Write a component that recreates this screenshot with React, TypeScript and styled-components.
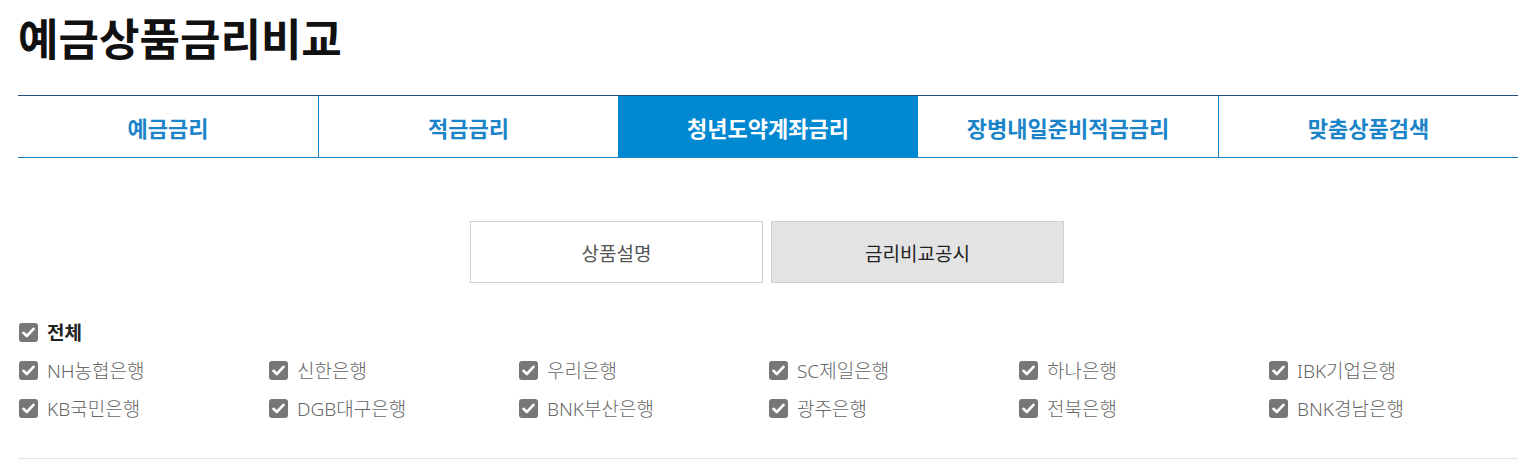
import React from "react";
import styled, { createGlobalStyle } from "styled-components";

const GlobalStyle = createGlobalStyle`
  html, body { margin: 0; padding: 0; background: #fff; }
  body { font-family: "Noto Sans CJK KR", "Noto Sans", sans-serif; }
  * { box-sizing: border-box; }
`;

const Page = styled.div`
  width: 1500px;
  margin-left: 18px;
  padding-top: 9px;
`;

const Title = styled.h1`
  margin: 0;
  font-size: 44px;
  line-height: 56px;
  font-weight: 700;
  color: #111;
`;

const TabBar = styled.div`
  margin-top: 30px;
  display: grid;
  grid-template-columns: repeat(5, 1fr);
  border-top: 1px solid #1f4f7c;
  border-bottom: 1px solid #1a80c4;
  height: 63px;
`;

const Tab = styled.div<{ $active?: boolean; $divider?: boolean }>`
  display: flex;
  align-items: center;
  justify-content: center;
  font-size: 22px;
  font-weight: 700;
  color: ${(p) => (p.$active ? "#fff" : "#1b84c9")};
  background: ${(p) => (p.$active ? "#0088d1" : "#fff")};
  border-left: ${(p) => (p.$divider ? "1px solid #1a80c4" : "none")};
`;

const SubTabs = styled.div`
  margin-top: 63px;
  display: flex;
  justify-content: center;
  gap: 8px;
  padding-right: 2px;
`;

const SubTab = styled.div<{ $active?: boolean }>`
  width: 293px;
  height: 62px;
  display: flex;
  align-items: center;
  justify-content: center;
  border: 1px solid #cfcfcf;
  background: ${(p) => (p.$active ? "#e3e3e3" : "#fff")};
  color: ${(p) => (p.$active ? "#222" : "#555")};
  font-size: 19px;
`;

const Filters = styled.div`
  margin-top: 30px;
  padding-bottom: 31px;
  border-bottom: 1px solid #e3e3e3;
`;

const Grid = styled.div`
  display: grid;
  grid-template-columns: repeat(6, 250px);
`;

const Item = styled.label<{ $bold?: boolean }>`
  display: flex;
  align-items: center;
  gap: 9px;
  height: 38px;
  padding-left: 1px;
  font-family: "Noto Sans", "Noto Sans CJK KR", sans-serif;
  font-size: 19px;
  font-weight: ${(p) => (p.$bold ? 700 : 300)};
  color: ${(p) => (p.$bold ? "#222" : "#666")};
`;

const Box = styled.span`
  width: 19px;
  height: 19px;
  border-radius: 3px;
  background: #777;
  display: flex;
  align-items: center;
  justify-content: center;
  flex-shrink: 0;
`;

const Check = () => (
  <Box>
    <svg width="13" height="11" viewBox="0 0 13 11">
      <path d="M1.5 5.8 L4.8 9 L11.5 1.8" fill="none" stroke="#fff" strokeWidth="2.6" strokeLinecap="round" strokeLinejoin="round" />
    </svg>
  </Box>
);

const tabs = ["예금금리", "적금금리", "청년도약계좌금리", "장병내일준비적금금리", "맞춤상품검색"];
const banks = [
  "NH농협은행", "신한은행", "우리은행", "SC제일은행", "하나은행", "IBK기업은행",
  "KB국민은행", "DGB대구은행", "BNK부산은행", "광주은행", "전북은행", "BNK경남은행",
];

export default function App() {
  return (
    <>
      <GlobalStyle />
      <Page>
        <Title>예금상품금리비교</Title>
        <TabBar>
          {tabs.map((t, i) => (
            <Tab key={t} $active={i === 2} $divider={i === 1 || i === 4}>
              {t}
            </Tab>
          ))}
        </TabBar>
        <SubTabs>
          <SubTab>상품설명</SubTab>
          <SubTab $active>금리비교공시</SubTab>
        </SubTabs>
        <Filters>
          <Item $bold>
            <Check />
            전체
          </Item>
          <Grid>
            {banks.map((b) => (
              <Item key={b}>
                <Check />
                {b}
              </Item>
            ))}
          </Grid>
        </Filters>
      </Page>
    </>
  );
}
